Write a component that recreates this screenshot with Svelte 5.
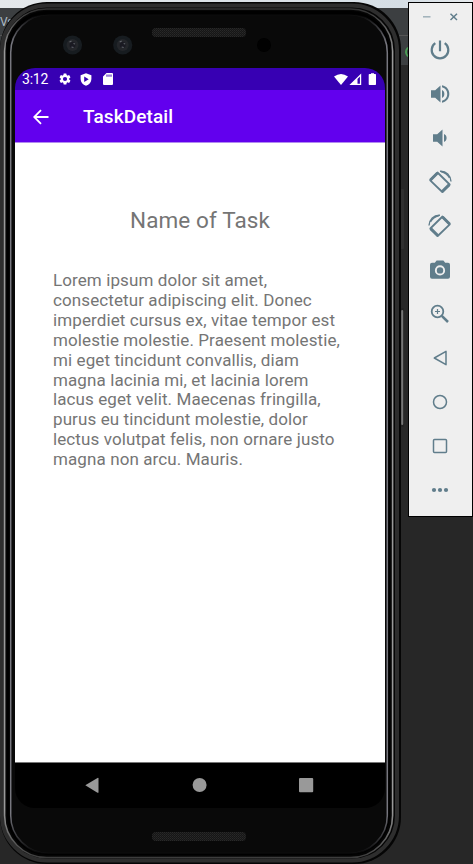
<script>
  const lines = [
    'Lorem ipsum dolor sit amet,',
    'consectetur adipiscing elit. Donec',
    'imperdiet cursus ex, vitae tempor est',
    'molestie molestie. Praesent molestie,',
    'mi eget tincidunt convallis, diam',
    'magna lacinia mi, et lacinia lorem',
    'lacus eget velit. Maecenas fringilla,',
    'purus eu tincidunt molestie, dolor',
    'lectus volutpat felis, non ornare justo',
    'magna non arcu. Mauris.'
  ];
</script>

<div class="desktop">
  <div class="titlebar"></div>
  <div class="menubar"><span>Vs</span></div>
  <div class="tabs"><i></i></div>

  <section class="phone">
    <svg class="frame" width="408" height="864" viewBox="0 0 408 864">
      <defs>
        <linearGradient id="shine" gradientUnits="userSpaceOnUse" x1="0" y1="10" x2="0" y2="860">
          <stop offset="0" stop-color="#333" />
          <stop offset=".05" stop-color="#999" />
          <stop offset=".94" stop-color="#999" />
          <stop offset="1" stop-color="#383838" />
        </linearGradient>
        <linearGradient id="rim" gradientUnits="userSpaceOnUse" x1="0" y1="14" x2="0" y2="855">
          <stop offset="0" stop-color="#77777f" stop-opacity="0" />
          <stop offset=".035" stop-color="#77777f" />
          <stop offset=".95" stop-color="#77777f" />
          <stop offset="1" stop-color="#77777f" stop-opacity="0" />
        </linearGradient>
        <pattern id="mesh" width="2" height="2" patternUnits="userSpaceOnUse">
          <rect width="2" height="2" fill="#161616" />
          <rect width="1" height="1" fill="#292929" />
          <rect x="1" y="1" width="1" height="1" fill="#222" />
        </pattern>
      </defs>
      <rect x="399" y="189" width="5" height="60" rx="1" fill="#303030" />
      <rect x="399" y="308" width="5" height="119" rx="1" fill="#222" />
      <rect x="401.2" y="310" width="2" height="115" rx="1" fill="#777" />
      <rect x="0" y="2" width="401" height="862" rx="47" fill="#050505" />
      <rect x="2" y="5.5" width="395" height="855" rx="45" fill="none" stroke="#2e2e2e" stroke-width="4" />
      <rect x="4.6" y="9" width="388" height="848.5" rx="42" fill="#050505" stroke="url(#shine)" stroke-width="1.6" />
      <rect x="7" y="11" width="383" height="844" rx="40" fill="#000" />
      <rect x="10.7" y="14.5" width="376.6" height="839" rx="38" fill="#090909" stroke="url(#rim)" stroke-width="1.5" />
      <rect x="152" y="28" width="94" height="9" rx="4" fill="url(#mesh)" />
      <rect x="152" y="832" width="94" height="9" rx="4" fill="url(#mesh)" />
      {#each [72.5, 122.7] as x}
        <circle cx={x} cy="45" r="9.6" fill="#171c20" />
        <circle cx={x} cy="45" r="6" fill="#24262a" />
        <circle cx={x} cy="45" r="3" fill="#1a1a22" />
        <path d="M{x - 3} 42l2-1M{x + 1} 43.5l1.5.5M{x - 1} 47l2 .5" stroke="#61646a" stroke-width="1.2" />
      {/each}
      <circle cx="264" cy="45" r="7" fill="#010101" />
    </svg>

    <div class="screen">
      <header class="status">
        <time>3:12</time>
        <svg class="gear" width="14" height="14" viewBox="0 0 24 24"><path fill="#fff" d="M19.14 12.94c.04-.3.06-.61.06-.94s-.02-.64-.07-.94l2.03-1.58a.49.49 0 0 0 .12-.61l-1.92-3.32a.488.488 0 0 0-.59-.22l-2.39.96c-.5-.38-1.03-.7-1.62-.94l-.36-2.54a.484.484 0 0 0-.48-.41h-3.84c-.24 0-.43.17-.47.41l-.36 2.54c-.59.24-1.13.57-1.62.94l-2.39-.96c-.22-.08-.47 0-.59.22L2.74 8.87c-.12.21-.08.47.12.61l2.03 1.58c-.05.3-.09.63-.09.94s.02.64.07.94l-2.03 1.58a.49.49 0 0 0-.12.61l1.92 3.32c.12.22.37.29.59.22l2.39-.96c.5.38 1.03.7 1.62.94l.36 2.54c.05.24.24.41.48.41h3.84c.24 0 .44-.17.47-.41l.36-2.54c.59-.24 1.13-.56 1.62-.94l2.39.96c.22.08.47 0 .59-.22l1.92-3.32c.12-.22.07-.47-.12-.61zM12 15.6A3.6 3.6 0 1 1 12 8.4a3.6 3.6 0 0 1 0 7.2z" /></svg>
        <svg class="shield" width="12" height="13" viewBox="0 0 12 13"><path fill="#fff" fill-rule="evenodd" d="M6 .3 11.4 2.2V6c0 3.2-2.2 5.7-5.4 6.7C2.8 11.7.6 9.2.6 6V2.2zM4.2 3.6v5.3L8.7 6.2z" /></svg>
        <svg class="sd" width="10" height="12" viewBox="0 0 10 12"><path fill="#fff" fill-rule="evenodd" d="M3.5 0H9q1 0 1 1v10q0 1-1 1H1q-1 0-1-1V3.5zM3.500 1.500v2.200h1V1.500zM5.500 1.500v2.200h1V1.500zM7.500 1.500v2.200h1V1.500z" /></svg>
        <span class="grow"></span>
        <svg class="signals" width="43" height="13" viewBox="0 0 43 13">
          <path fill="#fff" d="M0 3.5Q7-1.500 14 3.500L7 12z" />
          <path fill="#fff" fill-rule="evenodd" d="M27.200.5V12H15.400zM23.500 6v4.700h2.400V3.500z" />
          <path fill="#fff" d="M35.500 1h1.500V.2h3V1h1.200q.8 0 .8.8V11.200q0 .8-.8.8h-5.700q-.8 0-.8-.8V1.800q0-.8.8-.8z" />
        </svg>
      </header>
      <div class="appbar">
        <svg width="16" height="16" viewBox="0 0 16 16"><path d="M15.500 8H1.500M8 1.200 1.200 8 8 14.800" fill="none" stroke="#fff" stroke-width="1.8" /></svg>
        <h1>TaskDetail</h1>
      </div>
      <main>
        <h2>Name of Task</h2>
        <p>{#each lines as line}<span>{line}</span>{/each}</p>
      </main>
      <nav>
        <svg width="370" height="45" viewBox="0 0 370 45" fill="#999">
          <path d="M70.300 22.300 82.500 15q1-.5 1 .6v13.600q0 1-1 .5z" />
          <circle cx="184.600" cy="22" r="7" />
          <rect x="284" y="15" width="14.200" height="14.300" rx="1" />
        </svg>
      </nav>
    </div>
  </section>

  <aside>
    <div class="window">
      <svg width="62" height="28" viewBox="0 0 62 28" fill="none">
        <path d="M14 13.800h7.500" stroke="#9fb0b9" stroke-width="1.500" />
        <path d="M41.500 10.800l6.500 6.200M48 10.800 41.500 17" stroke="#607d8b" stroke-width="1.500" />
      </svg>
    </div>
    <div class="tool"><svg width="24" height="24" viewBox="0 0 24 24" fill="none" stroke="#607d8b" stroke-width="2.200"><path d="M12 2.500v10.700M7.300 5.200a8.300 8.300 0 1 0 9.400 0" /></svg></div>
    <div class="tool"><svg width="24" height="24" viewBox="0 0 24 24" fill="#607d8b"><path d="M3 8.200v7.600h4.200l5.300 4.700v-17L7.200 8.200zM14 8v8c3.200-1.300 3.200-6.700 0-8z" /><path d="M14 3.300v2c7 1.500 7 11.900 0 13.400v2c9.800-1.800 9.800-15.600 0-17.400z" /></svg></div>
    <div class="tool"><svg width="24" height="24" viewBox="0 0 24 24" fill="#607d8b"><path d="M5 8.200v7.600h4.200l5.300 4.700v-17L9.200 8.200zM16 8v8c3.500-1.300 3.500-6.700 0-8z" /></svg></div>
    <div class="tool"><svg width="24" height="24" viewBox="0 0 24 24" fill="none" stroke="#607d8b"><path d="M2.200 10.300 9.500 2.500 21.700 14.500 14.300 22z" stroke-width="1.800" stroke-linejoin="round" /><path d="M2.200 10.300 9.500 3M14 21.800l7.300-7.200" stroke-width="3" /><path d="M12 1.300C18.500 1 22.500 5.500 23 11.500" stroke-width="1.400" /><path d="M13 1.500Q19 3 21.500 8" stroke-width="1.300" /></svg></div>
    <div class="tool"><svg class="flip" width="24" height="24" viewBox="0 0 24 24" fill="none" stroke="#607d8b"><path d="M2.200 10.300 9.500 2.500 21.700 14.500 14.300 22z" stroke-width="1.800" stroke-linejoin="round" /><path d="M2.200 10.300 9.500 3M14 21.800l7.300-7.200" stroke-width="3" /><path d="M12 1.300C18.500 1 22.500 5.500 23 11.500" stroke-width="1.400" /><path d="M13 1.500Q19 3 21.500 8" stroke-width="1.300" /></svg></div>
    <div class="tool"><svg width="24" height="24" viewBox="0 0 24 24" fill="#607d8b"><path fill-rule="evenodd" d="M8.600 2.500h6.800l1.800 2.200H20q2 0 2 2v12q0 2-2 2H4q-2 0-2-2v-12q0-2 2-2h2.800zM12 7.300a5.100 5.100 0 1 0 0 10.200 5.100 5.100 0 0 0 0-10.200z" /><circle cx="12" cy="12.400" r="3.200" /></svg></div>
    <div class="tool"><svg width="24" height="24" viewBox="0 0 24 24" fill="none" stroke="#607d8b" stroke-width="1.800"><circle cx="9.500" cy="9.500" r="5.800" /><path d="M13.800 13.800 20 20" stroke-width="2.500" /><path d="M9.500 7v5M7 9.500h5" stroke-width="1.200" /></svg></div>
    <div class="tool"><svg width="24" height="24" viewBox="0 0 24 24" fill="none" stroke="#607d8b" stroke-width="1.500"><path d="M6.300 12 18 5.300v13.400z" stroke-linejoin="round" /></svg></div>
    <div class="tool"><svg width="24" height="24" viewBox="0 0 24 24" fill="none" stroke="#607d8b" stroke-width="1.500"><circle cx="12" cy="12" r="6.500" /></svg></div>
    <div class="tool"><svg width="24" height="24" viewBox="0 0 24 24" fill="none" stroke="#607d8b" stroke-width="1.500"><rect x="5.500" y="5.500" width="13" height="13" rx="1" /></svg></div>
    <div class="tool"><svg width="24" height="24" viewBox="0 0 24 24" fill="#607d8b"><circle cx="6" cy="12" r="2.100" /><circle cx="12" cy="12" r="2.100" /><circle cx="18" cy="12" r="2.100" /></svg></div>
  </aside>
</div>

<style>
  .desktop { position: relative; width: 473px; height: 864px; overflow: hidden; background: #272727; font-family: Roboto, sans-serif; }
  svg { display: block; flex: none; }
  .titlebar { height: 8px; background: linear-gradient(90deg, #e4e8eb, #d5dee5 85%, #e6eaed); }
  .menubar { height: 28px; background: #3c3f41; border-bottom: 1px solid #555; box-sizing: border-box; color: #aebbc5; font-size: 12px; line-height: 28px; }
  .menubar span { display: block; letter-spacing: -.5px; }
  .tabs { height: 29px; background: #3c3f41; display: flex; align-items: center; }
  .tabs i { width: 8px; height: 8px; border: 2px solid #499c54; border-radius: 50%; margin: 2px 0 0 405px; }
  .phone { position: absolute; left: 0; top: 0; width: 408px; height: 864px; }
  .frame { position: absolute; left: 0; top: 0; }
  .screen { position: relative; width: 370px; height: 740px; margin: 68px 0 0 15px; border-radius: 20px; overflow: hidden; display: flex; flex-direction: column; }
  .status { height: 22px; background: #3700b3; color: #fff; display: flex; align-items: center; padding: 0 7px; box-sizing: border-box; flex: none; }
  time { font-size: 14px; width: 36px; line-height: 22px; letter-spacing: -.2px; }
  .shield { margin-left: 8px; }
  .sd { margin-left: 11px; }
  .grow { flex: 1; }
  .signals { margin-right: 1px; }
  .appbar { height: 53px; flex: none; background: #6200ee; color: #fff; display: flex; align-items: center; padding: 2px 0 0 18px; box-sizing: border-box; border-bottom: 1px solid #b18af0; }
  h1 { margin: 0 0 0 34px; font-size: 19px; font-weight: 500; letter-spacing: .1px; line-height: 24px; }
  main { flex: 1; display: flex; flex-direction: column; background: #fff; color: #757575; }
  h2 { margin: 62px 0 0; text-align: center; font-weight: 400; font-size: 22.5px; line-height: 30px; letter-spacing: .1px; }
  p { margin: 36px 0 0 38px; font-size: 17px; line-height: 19.9px; letter-spacing: .1px; white-space: nowrap; }
  p span { display: block; }
  nav { height: 46px; flex: none; background: #000; border-top: 1px solid #777; box-sizing: border-box; }
  aside { position: absolute; left: 408px; top: 2px; width: 65px; height: 515px; box-sizing: border-box; border: 1px solid #000; background: #efefef; display: flex; flex-direction: column; }
  .window { height: 25px; }
  .tool { height: 44px; flex: none; display: flex; align-items: center; justify-content: center; }
  .tool svg { margin-right: 1px; }
  .flip { transform: scaleX(-1); }
</style>
